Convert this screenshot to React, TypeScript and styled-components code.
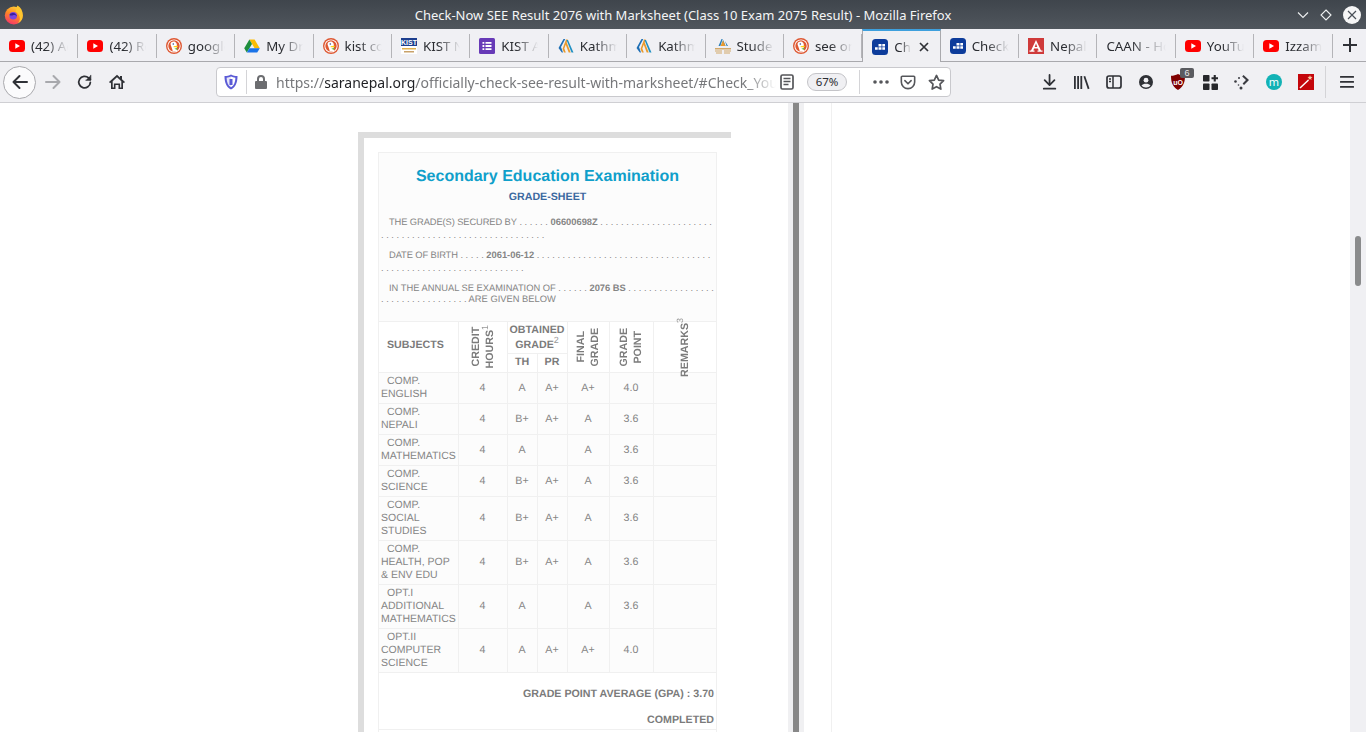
import styled, { createGlobalStyle } from "styled-components";
import React from "react";

const GlobalStyle = createGlobalStyle`
  html, body {
    margin: 0;
    padding: 0;
    height: 732px;
    overflow: hidden;
    background: #fff;
  }
`;

/* ---------- favicons ---------- */

function YouTubeIcon() {
  return (
    <svg width="16" height="16" viewBox="0 0 16 16">
      <rect x="0" y="2" width="16" height="12" rx="3.5" fill="#f00" />
      <path d="M6.3 5.2v5.6L11 8z" fill="#fff" />
    </svg>
  );
}

function DuckIcon() {
  return (
    <svg width="16" height="16" viewBox="0 0 16 16">
      <circle cx="8" cy="8" r="8" fill="#de5833" />
      <circle cx="8" cy="8" r="6.6" fill="#fff" />
      <circle cx="8" cy="8" r="5.7" fill="#de5833" />
      <path d="M4.6 5.600C5 3.900 7.500 3 9.300 4c1.700 1 1.700 3 1.500 4.500-.2 1.500.2 3.500.3 5H6.800c-.2-1.500-1-3.600-1.500-5-.4-1-.9-2-.7-2.900z" fill="#fff" />
      <circle cx="7.300" cy="6" r=".8" fill="#2d4f8e" />
      <path d="M7.600 8.300c1.400-.6 3.400-.8 4.400-.4.300.9-2.200 1.600-4.400 1.300z" fill="#fdd20a" />
      <path d="M8.300 10.800l3 1.200-.1-2.300z" fill="#65bc46" />
    </svg>
  );
}

function DriveIcon() {
  return (
    <svg width="16" height="16" viewBox="0 0 16 16">
      <path d="M5.400 1.500h5.200l5.200 8.800h-5.200z" fill="#fbbc04" />
      <path d="M5.400 1.500L.2 10.300l2.600 4.300L8 5.900z" fill="#1e8e3e" />
      <path d="M2.800 14.600h10.400l2.600-4.300H5.400z" fill="#1a73e8" />
    </svg>
  );
}

function KistIcon() {
  return (
    <svg width="16" height="16" viewBox="0 0 16 16">
      <rect width="16" height="16" fill="#fff" />
      <rect x="0" y="0" width="16" height="8" fill="#1d3f8f" />
      <text x="8" y="7" fontSize="7" fontWeight="700" textAnchor="middle" fill="#fff" fontFamily="Liberation Sans, sans-serif">KIST</text>
      <rect x="1" y="10" width="14" height="1.500" fill="#e0b04a" />
      <rect x="3" y="13" width="10" height="1.500" fill="#c9a26a" />
    </svg>
  );
}

function FormsIcon() {
  return (
    <svg width="16" height="16" viewBox="0 0 16 16">
      <rect width="16" height="16" rx="1.500" fill="#673ab7" />
      <path d="M3.500 4h1.800v1.800H3.500zM6.500 4h6v1.800h-6zM3.500 7.100h1.800v1.800H3.500zM6.500 7.100h6v1.800h-6zM3.500 10.200h1.800V12H3.500zM6.500 10.200h6V12h-6z" fill="#fff" />
    </svg>
  );
}

function StripesIcon() {
  return (
    <svg width="16" height="16" viewBox="0 0 16 16">
      <path d="M.5 10L5.500 1h1.800L3 9l2 5.500H3.800z" fill="#1f6fb5" />
      <path d="M4.500 11L8 1.500h1.800L6.300 10.500l1.500 4H6z" fill="#e99a2b" />
      <path d="M8.500 2h1.500l5.500 12.500h-2z" fill="#1f8fc2" />
      <path d="M7.500 6l1 -2 4.200 10.500h-2z" fill="#e99a2b" />
    </svg>
  );
}

function StudentIcon() {
  return (
    <svg width="16" height="16" viewBox="0 0 16 16">
      <path d="M3.500 8L6.500 1h1.200L5.400 8zM6.200 8l2-6 2.300 6zM10 3l3 5h-1.400z" fill="#2b7fb8" />
      <path d="M5.500 8L8 2.500 10.500 8z" fill="#e99a2b" />
      <path d="M0 10h16v1.500H0zM0 12.500h7v1H0zM9 12.500h7v1H9zM1 14.500h6v1H1zM9 14.500h6v1H9z" fill="#d2a868" />
    </svg>
  );
}

function CalendarIcon() {
  return (
    <svg width="16" height="16" viewBox="0 0 16 16">
      <rect width="16" height="16" rx="3.500" fill="#0d3c9b" />
      <path d="M6.500 5h3v2.400h-3zM10.300 5h2.700v2.400h-2.700zM3 8.200h2.700v2.600H3zM6.500 8.200h3v2.600h-3zM10.300 8.200h2.700v2.600h-2.700z" fill="#fff" />
    </svg>
  );
}

function NepalIcon() {
  return (
    <svg width="16" height="16" viewBox="0 0 16 16">
      <rect width="16" height="16" fill="#cf3a3a" />
      <path d="M8 2L3 12.500H1.500v1.200h5v-1.200H5.300l.8-2h3.800l.8 2H9.500v1.200h5v-1.200H13zM6.700 9L8 5.600 9.300 9z" fill="#fff" />
    </svg>
  );
}

/* ---------- toolbar icons ---------- */

function FirefoxLogo() {
  return (
    <svg width="20" height="20" viewBox="0 0 20 20">
      <defs>
        <linearGradient id="foxBody" x1="0.700" y1="0" x2="0.300" y2="1">
          <stop offset="0" stopColor="#ffd03a" />
          <stop offset="0.450" stopColor="#ff8a24" />
          <stop offset="1" stopColor="#f5336b" />
        </linearGradient>
      </defs>
      <circle cx="9.800" cy="10.500" r="9" fill="url(#foxBody)" />
      <path d="M18.800 10.500a9 9 0 0 1-5 8c2-2.500 2.500-5 1.500-7.500-.8-2-2.300-3.500-3.800-4.500C13 2.500 12.500 1.500 13.500.5c3.500 2 5.300 5.500 5.300 10z" fill="#ffc62e" />
      <circle cx="9.200" cy="10.800" r="3.800" fill="#7a45e0" />
      <path d="M5.400 10c1 .7 2.400.7 3.600.3 1.800-.6 3.200.3 4 1.300-.3-1.900-1.800-3.600-3.900-3.700C7.300 7.800 5.900 8.600 5.400 10z" fill="#3b1f9e" />
    </svg>
  );
}

const Stroke = ({ children, size = 18, color = "#2f3136", sw = 2 }: any) => (
  <svg width={size} height={size} viewBox="0 0 18 18" fill="none" stroke={color} strokeWidth={sw} strokeLinecap="round" strokeLinejoin="round">
    {children}
  </svg>
);

const BackIcon = () => (
  <Stroke><path d="M16 9H2.500M8.500 3L2.500 9l6 6" /></Stroke>
);
const ForwardIcon = () => (
  <Stroke color="#a8a9ad"><path d="M2 9h13.500M9.500 3l6 6-6 6" /></Stroke>
);
const ReloadIcon = () => (
  <Stroke size={16}><path d="M15 9.500a6.500 6.500 0 1 1-1.900-5l1.900 1.700" /><path d="M15.500 1.500v5.500H10" fill="#2f3136" strokeWidth="1" /></Stroke>
);
const HomeIcon = () => (
  <svg width="16" height="16" viewBox="0 0 16 16" fill="#2f3136">
    <path d="M8 .8L0 8l1.200 1.300L2 8.600V15h4.500v-4h3v4H14V8.600l.8.7L16 8l-3-2.700V2h-2v1.500zM8 3.300l4.300 3.900v6.200h-1.200v-4H4.900v4H3.700V7.200z" />
  </svg>
);
const ShieldIcon = () => (
  <svg width="14" height="16" viewBox="0 0 14 16">
    <path d="M7 .5c2 1 4 1.500 6.500 1.500 0 6-1.500 11-6.500 13.500C2 13 .5 8 .5 2 3 2 5 1.500 7 .5z" fill="#5b5bd6" />
    <path d="M7 2.600c1.400.6 2.800 1 4.400 1.100-.1 4.400-1.300 7.800-4.400 9.600z" fill="#fff" />
    <path d="M7 2.600c-1.400.6-2.800 1-4.400 1.100.1 4.400 1.300 7.800 4.400 9.600z" fill="#fff" opacity=".85" />
    <path d="M5.500 5h3v6h-3z" fill="#5b5bd6" />
  </svg>
);
const LockIcon = () => (
  <svg width="12" height="14" viewBox="0 0 12 14" fill="#6c6d70">
    <path d="M6 0a4 4 0 0 0-4 4v2H1a1 1 0 0 0-1 1v6a1 1 0 0 0 1 1h10a1 1 0 0 0 1-1V7a1 1 0 0 0-1-1h-1V4a4 4 0 0 0-4-4zm0 2a2 2 0 0 1 2 2v2H4V4a2 2 0 0 1 2-2z" />
  </svg>
);
const ReaderIcon = () => (
  <svg width="14" height="16" viewBox="0 0 14 16" fill="none" stroke="#55565a" strokeWidth="1.700">
    <rect x="1" y="1" width="12" height="14" rx="1.500" />
    <path d="M3.500 4.500h7M3.500 7.500h7M3.500 10.500h5" strokeWidth="1.300" />
  </svg>
);
const DotsIcon = () => (
  <svg width="16" height="4" viewBox="0 0 16 4" fill="#55565a">
    <circle cx="2" cy="2" r="1.800" /><circle cx="8" cy="2" r="1.800" /><circle cx="14" cy="2" r="1.800" />
  </svg>
);
const PocketIcon = () => (
  <Stroke size={16} color="#55565a" sw={1.800}>
    <path d="M2.500 2.500h13a1 1 0 0 1 1 1V9a7.500 7.500 0 0 1-15 0V3.500a1 1 0 0 1 1-1z" />
    <path d="M5.500 7.500L9 11l3.500-3.500" />
  </Stroke>
);
const StarIcon = () => (
  <Stroke size={17} color="#55565a" sw={1.800}>
    <path d="M9 1.500l2.300 4.900 5.200.7-3.800 3.600.9 5.300L9 13.400 4.400 16l.9-5.300L1.500 7.100l5.200-.7z" />
  </Stroke>
);
const DownloadIcon = () => (
  <Stroke size={16}><path d="M8.500 1v11M3 7l5.500 5.500L14 7M2 16.500h13" /></Stroke>
);
const LibraryIcon = () => (
  <svg width="16" height="15" viewBox="0 0 16 15" fill="#2f3136">
    <path d="M0 1h1.800v13H0zM3.200 1H5v13H3.200zM6.400 1h1.800v13H6.400zM9.500 1.400l1.700-.5 4.300 12.700-1.700.6z" />
  </svg>
);
const SidebarIcon = () => (
  <svg width="16" height="14" viewBox="0 0 16 14" fill="none" stroke="#2f3136" strokeWidth="1.700">
    <rect x="1" y="1" width="14" height="12" rx="2" />
    <path d="M7 1v12M3 4h2M3 6.500h2" strokeWidth="1.500" />
  </svg>
);
const AccountIcon = () => (
  <svg width="14" height="14" viewBox="0 0 14 14">
    <circle cx="7" cy="7" r="7" fill="#2f3136" />
    <circle cx="7" cy="5.200" r="2.400" fill="#f0f0f3" />
    <path d="M2.500 10.800C3.500 9.300 5 8.800 7 8.800s3.500.5 4.500 2A6 6 0 0 1 7 12.500a6 6 0 0 1-4.500-1.700z" fill="#f0f0f3" />
  </svg>
);
const UBlockIcon = () => (
  <svg width="14" height="16" viewBox="0 0 14 16">
    <path d="M7 0c2.200 1.100 4.500 1.700 7 1.800C14 8 12.500 13 7 16 1.500 13 0 8 0 1.800 2.500 1.700 4.800 1.100 7 0z" fill="#800000" />
    <text x="7" y="10.500" fontSize="7" fontWeight="700" fill="#fff" textAnchor="middle" fontFamily="Liberation Sans, sans-serif">uO</text>
  </svg>
);
const AddonGridIcon = () => (
  <svg width="15" height="15" viewBox="0 0 15 15" fill="#26272b">
    <rect x="0" y="0" width="6.500" height="6.500" rx=".8" />
    <rect x="0" y="8.500" width="6.500" height="6.500" rx=".8" />
    <rect x="8.500" y="8.500" width="6.500" height="6.500" rx=".8" />
    <path d="M10.700 0h2.100v2.200H15v2.100h-2.200v2.200h-2.100V4.300H8.500V2.200h2.200z" />
  </svg>
);
const ShareDotsIcon = () => (
  <svg width="16" height="16" viewBox="0 0 16 16" fill="#3a3b40">
    <path d="M9.500 1l5.500 5-5 5-1.400-1.500L12 6 8.200 2.400z" />
    <circle cx="1.500" cy="7.500" r="1.300" />
    <circle cx="5" cy="4" r="1" />
    <circle cx="7" cy="14" r="1.500" />
    <circle cx="4.500" cy="11" r=".8" />
  </svg>
);
const MercuryIcon = () => (
  <svg width="16" height="16" viewBox="0 0 16 16">
    <circle cx="8" cy="8" r="8" fill="#12b2b5" />
    <text x="8" y="11.500" fontSize="11" fill="#fff" textAnchor="middle" fontFamily="Noto Sans, sans-serif">m</text>
  </svg>
);
const WandIcon = () => (
  <svg width="16" height="16" viewBox="0 0 16 16">
    <rect width="16" height="16" fill="#c4060b" />
    <path d="M1.500 13.500L10 5.500l1 1-8.500 8z" fill="#fff" />
    <path d="M12 1l.6 1.800L14.500 3l-1.400 1.200.5 1.800L12 5l-1.600 1 .5-1.800L9.500 3l1.900-.2z" fill="#f7c9a0" />
  </svg>
);
const MenuIcon = () => (
  <svg width="14" height="12" viewBox="0 0 14 12" fill="#2f3136">
    <rect y="0" width="14" height="1.800" rx=".5" />
    <rect y="5" width="14" height="1.800" rx=".5" />
    <rect y="10" width="14" height="1.800" rx=".5" />
  </svg>
);

/* ---------- browser chrome ---------- */

const TitleBar = styled.div`
  height: 29px;
  display: flex;
  align-items: center;
  background: linear-gradient(#3f454c, #50565d);
  color: #f4f5f6;
  font: 13px "Noto Sans", sans-serif;
  padding: 0 4px;
`;
const LogoSlot = styled.div`
  width: 20px;
  height: 20px;
`;
const TitleText = styled.div`
  flex: 1;
  text-align: center;
  padding-left: 45px;
  white-space: nowrap;
`;
const WinButtons = styled.div`
  display: flex;
  align-items: center;
  gap: 11px;
  padding-right: 1px;
`;
const CloseCircle = styled.div`
  width: 18px;
  height: 18px;
  border-radius: 50%;
  background: #f6f6f6;
  display: flex;
  align-items: center;
  justify-content: center;
`;

const TabStrip = styled.div`
  height: 32px;
  display: flex;
  background: #f0f0f4;
  border-bottom: 1px solid #a9a9ad;
`;
const Tab = styled.div<{ $active?: boolean }>`
  width: 78.4px;
  flex: none;
  box-sizing: border-box;
  position: relative;
  display: flex;
  align-items: center;
  gap: 6px;
  padding-left: 9px;
  padding-top: ${(p) => (p.$active ? "0" : "2px")};
  height: ${(p) => (p.$active ? "33px" : "32px")};
  background: ${(p) => (p.$active ? "#f0f0f3" : "transparent")};
  border-top: ${(p) => (p.$active ? "2px solid #3ea0dd" : "none")};
  border-left: ${(p) => (p.$active ? "1px solid #a9a9ad" : "none")};
  border-right: ${(p) => (p.$active ? "1px solid #a9a9ad" : "none")};
  z-index: ${(p) => (p.$active ? 1 : 0)};
  &::after {
    content: "";
    position: absolute;
    right: 0;
    top: 5px;
    bottom: 3px;
    width: 1px;
    background: ${(p) => (p.$active ? "transparent" : "#b4b4b8")};
  }
`;
const TabLabel = styled.span<{ $narrow?: boolean }>`
  font: 13.3px "Noto Sans", sans-serif;
  color: #2a2c31;
  white-space: nowrap;
  overflow: hidden;
  flex: none;
  width: ${(p) => (p.$narrow ? "17px" : "37px")};
  -webkit-mask-image: linear-gradient(to right, #000 40%, transparent 100%);
  mask-image: linear-gradient(to right, #000 40%, transparent 100%);
`;
const PlainTabLabel = styled(TabLabel)`
  width: 60px;
`;
const TabClose = styled.div`
  width: 12px;
  height: 12px;
  margin-left: 1px;
  display: flex;
`;
const NewTab = styled.div`
  flex: 1;
  display: flex;
  align-items: center;
  justify-content: center;
  padding-left: 2px;
`;

const NavBar = styled.div`
  height: 40px;
  display: flex;
  align-items: center;
  background: #f0f0f3;
  border-bottom: 1px solid #cfcfd3;
  padding-left: 3px;
`;
const BackButton = styled.div`
  width: 33px;
  height: 33px;
  margin-right: 1px;
  border-radius: 50%;
  border: 1px solid #a9a9ad;
  background: #fbfbfc;
  box-sizing: border-box;
  display: flex;
  align-items: center;
  justify-content: center;
  flex: none;
`;
const NavIcon = styled.div`
  width: 32px;
  height: 32px;
  flex: none;
  display: flex;
  align-items: center;
  justify-content: center;
  position: relative;
`;
const UrlBar = styled.div`
  width: 735px;
  height: 30px;
  margin-left: 83px;
  margin-right: 83px;
  box-sizing: border-box;
  flex: none;
  display: flex;
  align-items: center;
  background: #fff;
  border: 1px solid #c9c9cd;
  border-radius: 4px;
  padding-left: 7px;
`;
const UrlDivider = styled.div<{ $left?: number; $right?: number }>`
  width: 1px;
  height: 24px;
  background: #d4d4d7;
  flex: none;
  margin-left: ${(p) => p.$left ?? 8}px;
  margin-right: ${(p) => p.$right ?? 8}px;
`;
const UrlText = styled.div`
  font: 14px "Noto Sans", sans-serif;
  color: #77787b;
  margin-left: 9px;
  width: 500px;
  flex: none;
  white-space: nowrap;
  overflow: hidden;
  -webkit-mask-image: linear-gradient(to right, #000 94%, transparent 100%);
  mask-image: linear-gradient(to right, #000 94%, transparent 100%);
`;
const UrlHost = styled.span`
  color: #1f2024;
`;
const ZoomPill = styled.div`
  width: 40px;
  height: 18px;
  box-sizing: border-box;
  border: 1px solid #c4c4c8;
  border-radius: 9px;
  background: #f0f0f3;
  font: 11.5px/16px "Noto Sans", sans-serif;
  color: #2a2c31;
  text-align: center;
  margin-left: 9px;
  flex: none;
`;
const UrlIconSlot = styled.div<{ $w: number }>`
  width: ${(p) => p.$w}px;
  flex: none;
  display: flex;
  justify-content: center;
`;
const Badge = styled.div`
  position: absolute;
  top: 2px;
  left: 18px;
  width: 14px;
  height: 10px;
  border-radius: 2px;
  background: #5a5b60;
  color: #e8e8ea;
  font: 9px/10px "Liberation Sans", sans-serif;
  text-align: center;
`;
const MenuDivider = styled.div`
  width: 1px;
  height: 32px;
  background: #d4d4d7;
  margin-left: 3px;
  margin-right: 5px;
  flex: none;
`;

/* ---------- page ---------- */

const Content = styled.div`
  height: 629px;
  display: flex;
  background: #fff;
`;
const Article = styled.div`
  width: 788px;
  flex: none;
  box-sizing: border-box;
  padding: 29px 0 0 358px;
  overflow: hidden;
`;
const Frame = styled.div`
  width: 373px;
  box-sizing: border-box;
  border-top: 6px solid #dddddd;
  border-left: 6px solid #dddddd;
  padding: 14px 14px 0 14px;
`;
const Sheet = styled.div`
  width: 339px;
  box-sizing: border-box;
  border: 1px solid #f0f0f0;
  border-bottom: 0;
  background: #fcfcfc;
  font-family: "Liberation Sans", Arial, sans-serif;
  color: #858585;
  text-rendering: geometricPrecision;
`;
const Heading = styled.div`
  padding-top: 15px;
  text-align: center;
  font-size: 16px;
  line-height: 18px;
  font-weight: 700;
  color: #109fca;
`;
const SubHeading = styled.div`
  margin-top: 5px;
  text-align: center;
  font-size: 10.67px;
  line-height: 12px;
  font-weight: 700;
  color: #3b689f;
`;
const Para = styled.div<{ $top: number; $h?: number }>`
  padding-left: 2px;
  font-size: 9.33px;
  line-height: 11px;
  white-space: nowrap;
  overflow: hidden;
  margin-top: ${(p) => p.$top}px;
  height: ${(p) => p.$h ?? 24}px;
`;
const ParaLine = styled.div<{ $indent?: boolean; $spaced?: boolean }>`
  padding-left: ${(p) => (p.$indent ? "8px" : "0")};
  height: ${(p) => (p.$spaced ? "13px" : "11px")};
`;
const TightLabel = styled.span`
  letter-spacing: -0.1px;
`;

const GradeTable = styled.table`
  border-collapse: collapse;
  table-layout: fixed;
  width: 337px;
  font-size: 10.67px;
  line-height: 13px;
`;
const TableRow = styled.tr<{ $h?: number }>`
  height: ${(p) => (p.$h ? `${p.$h}px` : "auto")};
`;
const HeadCell = styled.th`
  border: 1px solid #f0f0f0;
  padding: 0;
  font-weight: 700;
  color: #7b7b7b;
  text-align: center;
  background: #fff;
`;
const SubjectHead = styled(HeadCell)`
  text-align: left;
  padding: 0 0 3px 8px;
  border-left: 0;
`;
const GroupHead = styled(HeadCell)`
  line-height: 15px;
`;
const SubGroupHead = styled(HeadCell)`
  padding-bottom: 1px;
`;
const RemarkHead = styled(HeadCell)`
  border-right: 0;
`;
const Rotated = styled.div`
  height: 50px;
  display: flex;
  align-items: center;
  justify-content: center;
`;
const RotatedText = styled.div`
  writing-mode: vertical-rl;
  transform: rotate(180deg);
  white-space: nowrap;
  text-align: center;
  line-height: 14px;
`;
const Sup = styled.sup`
  font-weight: 400;
  font-size: 9px;
  line-height: 0;
  color: #999;
`;
const SubjectCell = styled.td`
  border: 1px solid #f0f0f0;
  border-left: 0;
  padding: 2px 2px 2px 2px;
  vertical-align: top;
  color: #858585;
  font-size: 10.5px;
`;
const SubjectLine = styled.div<{ $indent?: boolean }>`
  padding-left: ${(p) => (p.$indent ? "6px" : "0")};
  white-space: nowrap;
`;
const DataCell = styled.td`
  border: 1px solid #f0f0f0;
  padding: 0;
  text-align: center;
  color: #858585;
`;
const RemarkCell = styled(DataCell)`
  border-right: 0;
`;
const FooterCell = styled.td`
  border: 1px solid #f0f0f0;
  border-left: 0;
  border-right: 0;
  background: #fff;
  padding: 1px 2px 3px 0;
  text-align: right;
  font-weight: 700;
  color: #7b7b7b;
`;
const FooterLine = styled.div<{ $h: number }>`
  height: ${(p) => p.$h}px;
  display: flex;
  align-items: center;
  justify-content: flex-end;
`;

const Gutter = styled.div`
  width: 16px;
  flex: none;
  display: flex;
  justify-content: center;
  background: #f0f0f2;
`;
const GutterBar = styled.div`
  width: 6px;
  background: #888888;
`;
const Aside = styled.div`
  flex: 1;
  padding-left: 27px;
`;
const AsideColumn = styled.div`
  height: 100%;
  border-left: 1px solid #f0f0f0;
`;
const ScrollTrack = styled.div`
  width: 16px;
  flex: none;
  background: #f0f0f3;
  box-sizing: border-box;
  padding: 133px 5px 0 5px;
`;
const ScrollThumb = styled.div`
  width: 6px;
  height: 50px;
  border-radius: 3px;
  background: #8a8b8c;
`;

const tabs: { icon?: React.ReactNode; label: string }[] = [
  { icon: <YouTubeIcon />, label: "(42) Ad" },
  { icon: <YouTubeIcon />, label: "(42) Ro" },
  { icon: <DuckIcon />, label: "google" },
  { icon: <DriveIcon />, label: "My Dri" },
  { icon: <DuckIcon />, label: "kist co" },
  { icon: <KistIcon />, label: "KIST N" },
  { icon: <FormsIcon />, label: "KIST A" },
  { icon: <StripesIcon />, label: "Kathm" },
  { icon: <StripesIcon />, label: "Kathm" },
  { icon: <StudentIcon />, label: "Stude" },
  { icon: <DuckIcon />, label: "see on" },
];
const tabsAfter: { icon?: React.ReactNode; label: string }[] = [
  { icon: <CalendarIcon />, label: "Check" },
  { icon: <NepalIcon />, label: "Nepal" },
  { label: "CAAN - Ho" },
  { icon: <YouTubeIcon />, label: "YouTu" },
  { icon: <YouTubeIcon />, label: "Izzam" },
];

const rows = [
  { lines: ["COMP.", "ENGLISH"], th: "A", pr: "A+", fin: "A+", gp: "4.0", h: 31 },
  { lines: ["COMP.", "NEPALI"], th: "B+", pr: "A+", fin: "A", gp: "3.6", h: 31 },
  { lines: ["COMP.", "MATHEMATICS"], th: "A", pr: "", fin: "A", gp: "3.6", h: 31 },
  { lines: ["COMP.", "SCIENCE"], th: "B+", pr: "A+", fin: "A", gp: "3.6", h: 31 },
  { lines: ["COMP.", "SOCIAL", "STUDIES"], th: "B+", pr: "A+", fin: "A", gp: "3.6", h: 44 },
  { lines: ["COMP.", "HEALTH, POP", "& ENV EDU"], th: "B+", pr: "A+", fin: "A", gp: "3.6", h: 44 },
  { lines: ["OPT.I", "ADDITIONAL", "MATHEMATICS"], th: "A", pr: "", fin: "A", gp: "3.6", h: 44 },
  { lines: ["OPT.II", "COMPUTER", "SCIENCE"], th: "A", pr: "A+", fin: "A+", gp: "4.0", h: 44 },
];

const dots = (n: number) => Array(n).fill(".").join(" ");

function renderTab(t: { icon?: React.ReactNode; label: string }, i: number) {
  return (
    <Tab key={i}>
      {t.icon}
      {t.icon ? <TabLabel>{t.label}</TabLabel> : <PlainTabLabel>{t.label}</PlainTabLabel>}
    </Tab>
  );
}

export default function App() {
  return (
    <>
      <GlobalStyle />
      <TitleBar>
        <LogoSlot><FirefoxLogo /></LogoSlot>
        <TitleText>Check-Now SEE Result 2076 with Marksheet (Class 10 Exam 2075 Result) - Mozilla Firefox</TitleText>
        <WinButtons>
          <svg width="12" height="8" viewBox="0 0 12 8" fill="none" stroke="#eef0f1" strokeWidth="1.100"><path d="M1 1.500l5 5 5-5" /></svg>
          <svg width="12" height="12" viewBox="0 0 12 12" fill="none" stroke="#eef0f1" strokeWidth="1.100"><path d="M6 1l5 5-5 5-5-5z" /></svg>
          <CloseCircle>
            <svg width="10" height="10" viewBox="0 0 10 10" stroke="#4a5057" strokeWidth="1.200"><path d="M1 1l8 8M9 1l-8 8" /></svg>
          </CloseCircle>
        </WinButtons>
      </TitleBar>

      <TabStrip>
        {tabs.map(renderTab)}
        <Tab $active>
          <CalendarIcon />
          <TabLabel $narrow>Check</TabLabel>
          <TabClose>
            <svg width="12" height="12" viewBox="0 0 12 12" stroke="#2f3136" strokeWidth="1.700"><path d="M2 2l8 8M10 2l-8 8" /></svg>
          </TabClose>
        </Tab>
        {tabsAfter.map(renderTab)}
        <NewTab>
          <svg width="14" height="14" viewBox="0 0 14 14" fill="#2f3136"><path d="M6 0h2v6h6v2H8v6H6V8H0V6h6z" /></svg>
        </NewTab>
      </TabStrip>

      <NavBar>
        <BackButton><BackIcon /></BackButton>
        <NavIcon><ForwardIcon /></NavIcon>
        <NavIcon><ReloadIcon /></NavIcon>
        <NavIcon><HomeIcon /></NavIcon>
        <UrlBar>
          <ShieldIcon />
          <UrlDivider />
          <LockIcon />
          <UrlText>
            https://<UrlHost>saranepal.org</UrlHost>/officially-check-see-result-with-marksheet/#Check_Your
          </UrlText>
          <UrlIconSlot $w={22}><ReaderIcon /></UrlIconSlot>
          <ZoomPill>67%</ZoomPill>
          <UrlDivider $left={12} $right={10} />
          <UrlIconSlot $w={21}><DotsIcon /></UrlIconSlot>
          <UrlIconSlot $w={34}><PocketIcon /></UrlIconSlot>
          <UrlIconSlot $w={22}><StarIcon /></UrlIconSlot>
        </UrlBar>
        <NavIcon><DownloadIcon /></NavIcon>
        <NavIcon><LibraryIcon /></NavIcon>
        <NavIcon><SidebarIcon /></NavIcon>
        <NavIcon><AccountIcon /></NavIcon>
        <NavIcon><UBlockIcon /><Badge>6</Badge></NavIcon>
        <NavIcon><AddonGridIcon /></NavIcon>
        <NavIcon><ShareDotsIcon /></NavIcon>
        <NavIcon><MercuryIcon /></NavIcon>
        <NavIcon><WandIcon /></NavIcon>
        <MenuDivider />
        <NavIcon><MenuIcon /></NavIcon>
      </NavBar>

      <Content>
        <Article>
          <Frame>
            <Sheet>
              <Heading>Secondary Education Examination</Heading>
              <SubHeading>GRADE-SHEET</SubHeading>
              <Para $top={14}>
                <ParaLine $indent $spaced><TightLabel>THE GRADE(S) SECURED BY</TightLabel> {dots(6)} <b>06600698Z</b> {dots(22)}</ParaLine>
                <ParaLine>{dots(32)}</ParaLine>
              </Para>
              <Para $top={9}>
                <ParaLine $indent $spaced><TightLabel>DATE OF BIRTH</TightLabel> {dots(5)} <b>2061-06-12</b> {dots(34)}</ParaLine>
                <ParaLine>{dots(28)}</ParaLine>
              </Para>
              <Para $top={9} $h={38}>
                <ParaLine $indent>IN THE ANNUAL SE EXAMINATION OF {dots(6)} <b>2076 BS</b> {dots(17)}</ParaLine>
                <ParaLine>{dots(17)} ARE GIVEN BELOW</ParaLine>
              </Para>
              <GradeTable>
                <colgroup>
                  <col width="79" />
                  <col width="49" />
                  <col width="30" />
                  <col width="30" />
                  <col width="42" />
                  <col width="44" />
                  <col width="63" />
                </colgroup>
                <thead>
                  <TableRow $h={32}>
                    <SubjectHead rowSpan={2}>SUBJECTS</SubjectHead>
                    <HeadCell rowSpan={2}>
                      <Rotated><RotatedText>CREDIT<br />HOURS<Sup>1</Sup></RotatedText></Rotated>
                    </HeadCell>
                    <GroupHead colSpan={2}>OBTAINED<br />GRADE<Sup>2</Sup></GroupHead>
                    <HeadCell rowSpan={2}>
                      <Rotated><RotatedText>FINAL<br />GRADE</RotatedText></Rotated>
                    </HeadCell>
                    <HeadCell rowSpan={2}>
                      <Rotated><RotatedText>GRADE<br />POINT</RotatedText></Rotated>
                    </HeadCell>
                    <RemarkHead rowSpan={2}>
                      <Rotated><RotatedText>REMARKS<Sup>3</Sup></RotatedText></Rotated>
                    </RemarkHead>
                  </TableRow>
                  <TableRow $h={19}>
                    <SubGroupHead>TH</SubGroupHead>
                    <SubGroupHead>PR</SubGroupHead>
                  </TableRow>
                </thead>
                <tbody>
                  {rows.map((r, i) => (
                    <TableRow key={i} $h={r.h}>
                      <SubjectCell>
                        {r.lines.map((l, j) => (
                          <SubjectLine key={j} $indent={j === 0}>{l}</SubjectLine>
                        ))}
                      </SubjectCell>
                      <DataCell>4</DataCell>
                      <DataCell>{r.th}</DataCell>
                      <DataCell>{r.pr}</DataCell>
                      <DataCell>{r.fin}</DataCell>
                      <DataCell>{r.gp}</DataCell>
                      <RemarkCell />
                    </TableRow>
                  ))}
                  <TableRow>
                    <FooterCell colSpan={7}>
                      <FooterLine $h={40}>GRADE POINT AVERAGE (GPA) : 3.70</FooterLine>
                      <FooterLine $h={12}>COMPLETED</FooterLine>
                    </FooterCell>
                  </TableRow>
                  <TableRow $h={20}>
                    <FooterCell colSpan={7} />
                  </TableRow>
                </tbody>
              </GradeTable>
            </Sheet>
          </Frame>
        </Article>
        <Gutter><GutterBar /></Gutter>
        <Aside><AsideColumn /></Aside>
        <ScrollTrack><ScrollThumb /></ScrollTrack>
      </Content>
    </>
  );
}
